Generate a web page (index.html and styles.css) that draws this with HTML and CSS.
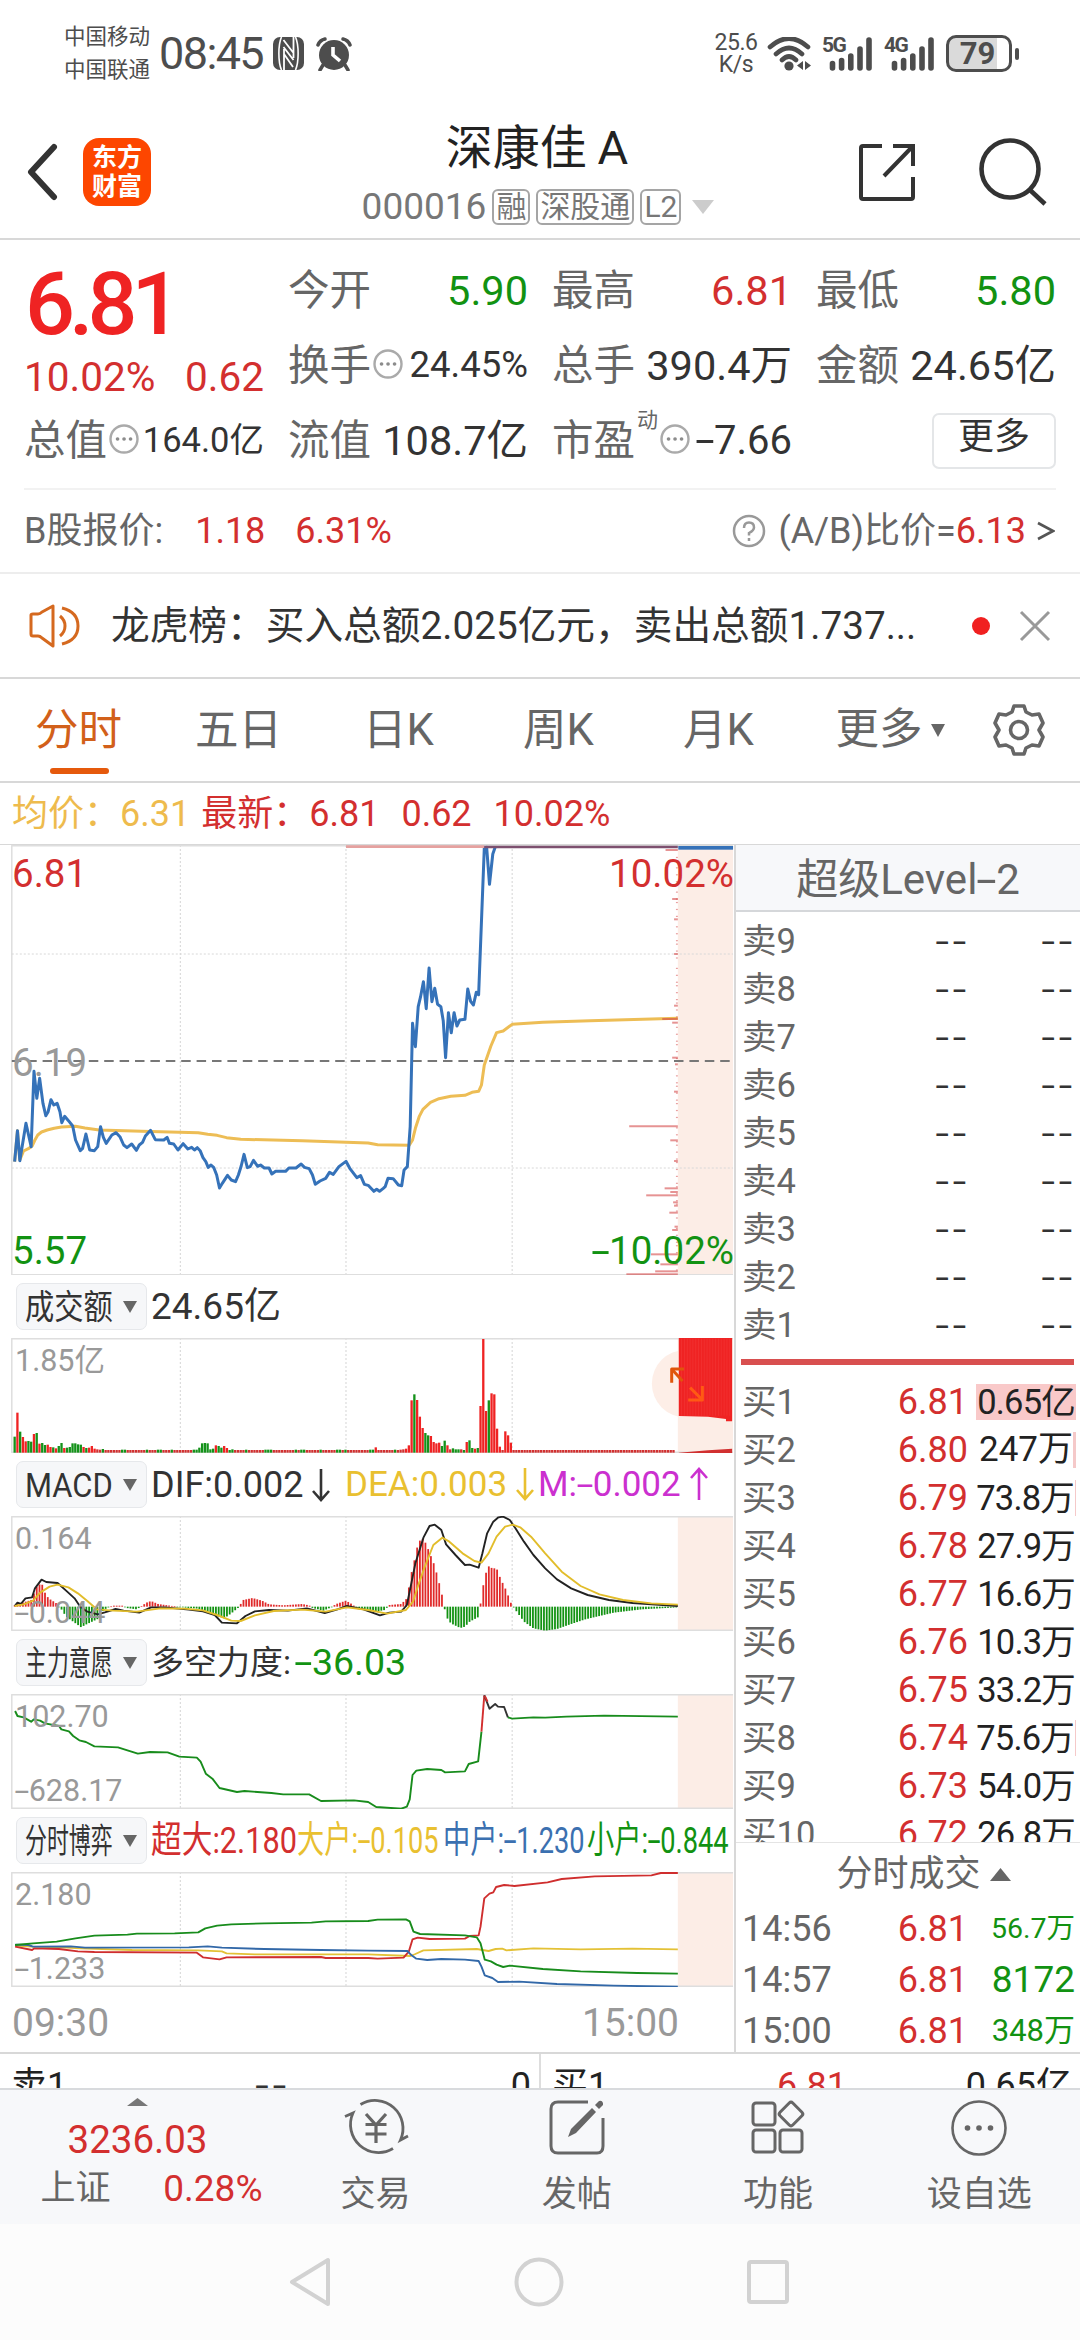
FILE: index.html
```html
<!DOCTYPE html>
<html lang="zh-CN">
<head>
<meta charset="utf-8">
<title>深康佳 A 000016</title>
<link rel="stylesheet" href="styles.css">
</head>
<body>
<div class="statusbar">
  <div class="carriers"><span>中国移动</span><span>中国联通</span></div>
  <span class="clock">08:45</span>
  <svg class="nfc" width="31" height="33" viewBox="0 0 31 33"><rect width="31" height="33" rx="7" fill="#4d4d4d"/><path d="M8.500 0C5 8 5 25 8.500 33M22.500 0C26 8 26 25 22.500 33" stroke="#fff" stroke-width="1.600" fill="none"/><path d="M11 12v21M20.500 0v21M10.500 3L20.500 16M10.500 10L20.500 23M11 17L20 30" stroke="#fff" stroke-width="1.800" fill="none"/></svg>
  <svg class="alarm" width="36" height="34" viewBox="0 0 36 34"><circle cx="18" cy="18" r="15" fill="#4d4d4d"/><path d="M2 8Q4 3 9 2M34 8Q32 3 27 2M7 28l-3 5M29 28l3 5" stroke="#4d4d4d" stroke-width="3.5" fill="none" stroke-linecap="round"/><path d="M17 10v8l7 6" stroke="#fff" stroke-width="3.6" fill="none"/></svg>
  <div class="speed"><span>25.6</span><span>K/s</span></div>
  <svg class="wifi" width="45" height="34" viewBox="0 0 45 34" fill="none" stroke="#4d4d4d" stroke-width="4.6" stroke-linecap="round"><path d="M3 10Q22-7 41 10M9 17Q22 5 35 17M15 23Q22 16 29 23"/><circle cx="22" cy="29" r="4.6" fill="#4d4d4d" stroke="none"/><path d="M36 24v9l-6-4.500zM38 24v9l6-4.500z" fill="#4d4d4d" stroke="none"/></svg>
  <div class="signal"><b>5G</b><svg width="52" height="34" viewBox="0 0 52 34" stroke="#4d4d4d" stroke-width="5.600" stroke-linecap="round"><path d="M10.500 26.500V31M19.600 23.500V31M28.800 19V31M38 12V31M47 3V31"/></svg></div>
  <div class="signal"><b>4G</b><svg width="52" height="34" viewBox="0 0 52 34" stroke="#4d4d4d" stroke-width="5.600" stroke-linecap="round"><path d="M10.500 26.500V31M19.600 23.500V31M28.800 19V31M38 12V31M47 3V31"/></svg></div>
  <div class="battery"><b>79</b></div><i class="nub"></i>
</div>

<header class="header">
  <svg class="back" width="34" height="58" viewBox="0 0 34 58"><path d="M29 4L6 29L29 54" stroke="#333" stroke-width="6" fill="none" stroke-linecap="round" stroke-linejoin="round"/></svg>
  <div class="logo"><span>东方</span><span>财富</span></div>
  <div class="title">
    <h1>深康佳 A</h1>
    <div class="code">000016<span class="tag">融</span><span class="tag">深股通</span><span class="tag">L2</span><svg width="22" height="14" viewBox="0 0 22 14"><path d="M0 0h22L11 14z" fill="#ccc"/></svg></div>
  </div>
  <svg class="share" width="60" height="60" viewBox="0 0 60 60" fill="none" stroke="#333" stroke-width="4"><path d="M25 4H6Q4 4 4 6V55Q4 57 6 57H54Q56 57 56 55V35M36 4H56V24M56 4L27 34"/></svg>
  <svg class="search" width="70" height="70" viewBox="0 0 70 70" fill="none" stroke="#333" stroke-width="4.600"><circle cx="32" cy="32" r="28.500"/><path d="M52 53L67 67"/></svg>
</header>

<section class="quote">
  <div class="col first">
    <strong class="price">6.81</strong>
    <div class="change up"><span>10.02%</span><span>0.62</span></div>
    <div class="cell"><label>总值</label><svg class="dots" width="30" height="30" viewBox="0 0 30 30"><circle cx="15" cy="15" r="13.500"/><path d="M8.500 15h.1M15 15h.1M21.500 15h.1"/></svg><span class="v34">164.0亿</span></div>
  </div>
  <div class="col">
    <div class="cell"><label>今开</label><span class="down">5.90</span></div>
    <div class="cell"><label>换手</label><svg class="dots" width="30" height="30" viewBox="0 0 30 30"><circle cx="15" cy="15" r="13.500"/><path d="M8.500 15h.1M15 15h.1M21.500 15h.1"/></svg><span class="v36">24.45%</span></div>
    <div class="cell"><label>流值</label><span>108.7亿</span></div>
  </div>
  <div class="col">
    <div class="cell"><label>最高</label><span class="up">6.81</span></div>
    <div class="cell"><label>总手</label><span>390.4万</span></div>
    <div class="cell"><label>市盈</label><sup>动</sup><svg class="dots" width="30" height="30" viewBox="0 0 30 30"><circle cx="15" cy="15" r="13.500"/><path d="M8.500 15h.1M15 15h.1M21.500 15h.1"/></svg><span class="pe"><span class="n">-</span>7.66</span></div>
  </div>
  <div class="col">
    <div class="cell"><label>最低</label><span class="down">5.80</span></div>
    <div class="cell"><label>金额</label><span>24.65亿</span></div>
    <div class="cell end"><button class="more">更多</button></div>
  </div>
</section>

<section class="bshare">
  <span>B股报价:</span><span class="up b1">1.18</span><span class="up b2">6.31%</span>
  <svg class="help" width="34" height="34" viewBox="0 0 34 34" fill="none" stroke="#999" stroke-width="2.500"><circle cx="17" cy="17" r="15"/><path d="M12 14Q12 8.500 17 8.500T22 13.500Q22 16.500 17 19V21.500M17 24V27"/></svg>
  <span class="ratio">(A/B)比价=<span class="up">6.13</span></span>
  <svg width="18" height="20" viewBox="0 0 18 20"><path d="M1 2L16 10L1 18" fill="none" stroke="#555" stroke-width="2.600"/></svg>
</section>

<section class="news">
  <svg width="52" height="44" viewBox="0 0 52 44" fill="none" stroke="#d5691f" stroke-width="3"><path d="M2 11Q2 10 4 10H9Q11 10 13 8L24 2V42L13 34Q11 32 9 32H4Q2 32 2 30Z" stroke-linejoin="round"/><path d="M31 12Q36 16 36 22T31 32M33 4Q49 8 49 22T33 40"/></svg>
  <p>龙虎榜：买入总额2.025亿元，卖出总额1.737...</p>
  <i class="reddot"></i>
  <svg width="32" height="32" viewBox="0 0 32 32"><path d="M2 2L30 30M30 2L2 30" stroke="#999" stroke-width="3"/></svg>
</section>

<nav class="tabs">
  <a class="on">分时</a><a>五日</a><a>日K</a><a>周K</a><a>月K</a>
  <a class="more-tab">更多<svg width="14" height="13" viewBox="0 0 14 13"><path d="M0 0h14L7 13z" fill="#666"/></svg></a>
  <svg class="gear" width="54" height="54" viewBox="0 0 54 54" fill="none" stroke="#666" stroke-width="3.600" stroke-linejoin="round"><path d="M22 3H32L34 9L40 12L47 11L51 20L47 27L51 34L47 43L40 42L34 45L32 51H22L20 45L14 42L7 43L3 34L7 27L3 20L7 11L14 12L20 9Z"/><circle cx="27" cy="27" r="8.500"/></svg>
</nav>

<div class="avg"><span class="gold">均价：6.31</span><span class="up a2">最新：6.81</span><span class="up a3">0.62</span><span class="up a4">10.02%</span></div>

<main class="main">
  <section class="charts">
    <div class="panel big">
      <svg id="price" viewBox="0 15 1555 1290" preserveAspectRatio="none"></svg>
      <span class="lab up tl">6.81</span><span class="lab up tr">10.02%</span>
      <span class="lab ml">6.19</span>
      <span class="lab down bl">5.57</span><span class="lab down br"><span class="n">-</span>10.02%</span>
    </div>
    <div class="ind"><div class="pill"><span class="sx3">成交额</span><i></i></div><span class="i1">24.65亿</span></div>
    <div class="panel">
      <svg id="vol" viewBox="0 204 1555 345" preserveAspectRatio="none"></svg>
      <span class="lab sm st">1.85亿</span>
    </div>
    <div class="ind"><div class="pill"><span class="sxm">MACD</span><i></i></div><span class="i1 dif">DIF:0.002<svg width="20" height="34" viewBox="0 0 20 34"><path d="M10 1V31M2 23L10 32L18 23" fill="none" stroke="#333" stroke-width="2.600"/></svg></span><span class="dea">DEA:0.003<svg width="20" height="34" viewBox="0 0 20 34"><path d="M10 1V31M2 23L10 32L18 23" fill="none" stroke="#e9c030" stroke-width="2.600"/></svg></span><span class="mm">M:<span class="n">-</span>0.002<svg width="20" height="34" viewBox="0 0 20 34"><path d="M10 33V3M2 11L10 2L18 11" fill="none" stroke="#cb30cf" stroke-width="2.600"/></svg></span></div>
    <div class="panel">
      <svg id="macd" viewBox="0 738 1555 345" preserveAspectRatio="none"></svg>
      <span class="lab sm st">0.164</span><span class="lab sm sb"><span class="n">-</span>0.044</span>
    </div>
    <div class="ind"><div class="pill"><span class="sx4">主力意愿</span><i></i></div><span class="i1 force">多空力度:</span><span class="down fv"><span class="n">-</span>36.03</span></div>
    <div class="panel">
      <svg id="force" viewBox="0 192 1555 345" preserveAspectRatio="none"></svg>
      <span class="lab sm st">102.70</span><span class="lab sm sb"><span class="n">-</span>628.17</span>
    </div>
    <div class="ind"><div class="pill"><span class="sx4">分时博弈</span><i></i></div><div class="game"><span class="g1">超大:2.180</span><span class="g2">大户:<span class="n">-</span>0.105</span><span class="g3">中户:<span class="n">-</span>1.230</span><span class="g4">小户:<span class="n">-</span>0.844</span></div></div>
    <div class="panel">
      <svg id="game" viewBox="0 726 1555 345" preserveAspectRatio="none"></svg>
      <span class="lab sm st">2.180</span><span class="lab sm sb"><span class="n">-</span>1.233</span>
    </div>
    <div class="times"><span>09:30</span><span>15:00</span></div>
  </section>

  <section class="book">
    <h2>超级Level<span class="n">-</span>2</h2>
    <div class="asks">
      <div class="row"><span>卖9</span><b>--</b><b>--</b></div>
      <div class="row"><span>卖8</span><b>--</b><b>--</b></div>
      <div class="row"><span>卖7</span><b>--</b><b>--</b></div>
      <div class="row"><span>卖6</span><b>--</b><b>--</b></div>
      <div class="row"><span>卖5</span><b>--</b><b>--</b></div>
      <div class="row"><span>卖4</span><b>--</b><b>--</b></div>
      <div class="row"><span>卖3</span><b>--</b><b>--</b></div>
      <div class="row"><span>卖2</span><b>--</b><b>--</b></div>
      <div class="row"><span>卖1</span><b>--</b><b>--</b></div>
    </div>
    <div class="spread"></div>
    <div class="bids">
      <div class="row"><span>买1</span><em>6.81</em><u class="full">0.65亿</u></div>
      <div class="row"><span>买2</span><em>6.80</em><u class="w3 wide">247万</u></div>
      <div class="row"><span>买3</span><em>6.79</em><u class="w1">73.8万</u></div>
      <div class="row"><span>买4</span><em>6.78</em><u>27.9万</u></div>
      <div class="row"><span>买5</span><em>6.77</em><u>16.6万</u></div>
      <div class="row"><span>买6</span><em>6.76</em><u>10.3万</u></div>
      <div class="row"><span>买7</span><em>6.75</em><u>33.2万</u></div>
      <div class="row"><span>买8</span><em>6.74</em><u class="w1">75.6万</u></div>
      <div class="row"><span>买9</span><em>6.73</em><u>54.0万</u></div>
      <div class="row"><span>买10</span><em>6.72</em><u>26.8万</u></div>
    </div>
    <h3>分时成交<svg width="21" height="13" viewBox="0 0 21 13"><path d="M10.500 0L21 13H0z" fill="#666"/></svg></h3>
    <div class="trades">
      <div class="row"><span>14:56</span><em>6.81</em><u class="t28">56.7万</u></div>
      <div class="row"><span>14:57</span><em>6.81</em><u class="t36">8172</u></div>
      <div class="row"><span>15:00</span><em>6.81</em><u class="t31">348万</u></div>
    </div>
  </section>
</main>

<section class="strip">
  <div><span>卖1</span><b>--</b><span>0</span></div>
  <div><span>买1</span><em>6.81</em><span>0.65亿</span></div>
</section>

<footer class="dock">
  <div class="index">
    <svg width="21" height="8" viewBox="0 0 21 8"><path d="M10.500 0L21 8H0z" fill="#777"/></svg>
    <strong>3236.03</strong>
    <div><span>上证</span><em>0.28%</em></div>
  </div>
  <a><svg width="68" height="60" viewBox="0 0 68 60" fill="none" stroke="#666" stroke-width="2.800"><path d="M18.500 6.500A28 28 0 0 1 58.500 42L66 38M51 50.500A28 28 0 0 1 11 15L3 18.500"/><path d="M24 16L34 27L44 16M23.500 26.500H44.500M23.500 36H44.500M34 26V45" stroke-width="3.200"/></svg><span>交易</span></a>
  <a><svg width="56" height="60" viewBox="0 0 56 60" fill="none" stroke="#666" stroke-width="3"><path d="M39 4H9Q2 4 2 11V48Q2 55 9 55H48Q54 55 54 48V20"/><path d="M43 10L47 14L27 35L19 39L22 31ZM46 7L50 3Q53 2 54 5L54 7L50 11Z" fill="#666" stroke="none"/></svg><span>发帖</span></a>
  <a><svg width="56" height="60" viewBox="0 0 56 60" fill="none" stroke="#666" stroke-width="3"><rect x="3" y="5" width="22" height="22" rx="3"/><rect x="3" y="32" width="22" height="22" rx="3"/><rect x="30" y="32" width="22" height="22" rx="3"/><rect x="32" y="7" width="18" height="18" rx="2.500" transform="rotate(45 41 16)"/></svg><span>功能</span></a>
  <a><svg width="60" height="60" viewBox="0 0 60 60" fill="none" stroke="#666" stroke-width="2.600"><circle cx="30" cy="30" r="26.500"/><g fill="#666" stroke="none"><circle cx="18.500" cy="30" r="2.800"/><circle cx="30" cy="30" r="2.800"/><circle cx="41.500" cy="30" r="2.800"/></g></svg><span>设自选</span></a>
</footer>

<div class="sysnav">
  <svg width="44" height="52" viewBox="0 0 44 52"><path d="M40 4V48L4 26Z" fill="none" stroke="#d2d2d2" stroke-width="4" stroke-linejoin="round"/></svg>
  <svg width="52" height="52" viewBox="0 0 52 52"><circle cx="26" cy="26" r="22.500" fill="none" stroke="#d2d2d2" stroke-width="4"/></svg>
  <svg width="44" height="46" viewBox="0 0 44 46"><rect x="3" y="3" width="38" height="40" rx="2" fill="none" stroke="#d2d2d2" stroke-width="4"/></svg>
</div>
<script src="charts.js"></script>
</body>
</html>
```

FILE: styles.css
```css
* { box-sizing: border-box; }
body {
  margin: 0; width: 1080px; height: 2340px; overflow: hidden; background: #fff; color: #333;
  font-family: Roboto, "Noto Sans CJK SC", sans-serif; font-size: 36px; line-height: 1;
}
svg { display: block; flex: none; }
i, em { font-style: normal; }
u { text-decoration: none; }
b { font-weight: 400; }
h1, h2, h3, p { margin: 0; font-weight: 400; }
.up { color: #d32f2f; }
.down { color: #129212; }
/* minus signs are drawn wide, as in the app's numerals */
.n { display: inline-block; width: .45em; text-align: center; transform: scaleX(1.75); }

.statusbar { height: 110px; padding-left: 64px; display: flex; align-items: center; color: #4d4d4d; padding-bottom: 3px; }
.carriers { display: flex; flex-direction: column; font-size: 21.5px; line-height: 33px; width: 95px; margin-top: -2px; }
.clock { font-size: 45px; letter-spacing: -1.6px; width: 114px; }
.alarm { margin-left: 12px; }
.speed { margin-left: 361px; width: 46px; text-align: center; display: flex; flex-direction: column; font-size: 23px; line-height: 22px; letter-spacing: -.5px; }
.wifi { margin-left: 8px; margin-right: 10px; }
.signal { position: relative; width: 62px; height: 34px; display: flex; align-items: center; }
.signal b { position: absolute; left: 0; top: 0; font-weight: 700; font-size: 21px; line-height: 17px; letter-spacing: -1.5px; }
.battery { width: 66px; height: 37px; border: 3px solid #4d4d4d; border-radius: 10px; background: linear-gradient(90deg, #dadada 48px, #fff 48px); }
.battery b { display: block; text-align: center; font-weight: 700; font-size: 31px; line-height: 32px; padding-right: 4px; padding-left: 1px; }
.nub { width: 4px; height: 12px; border-radius: 2px; background: #4d4d4d; margin-left: 3px; }

.header { height: 130px; border-bottom: 2px solid #d8d8d8; display: flex; }
.back { margin: 33px 0 0 25px; }
.logo { margin: 28px 0 0 24px; width: 68px; height: 68px; border-radius: 16px; background: #fd4600; color: #fff; font-size: 25px; font-weight: 700; line-height: 29px; display: flex; flex-direction: column; align-items: center; justify-content: center; }
.title { width: 420px; margin-left: 177px; display: flex; flex-direction: column; align-items: center; }
h1 { font-size: 47px; line-height: 60px; margin-top: 8px; color: #222; padding-right: 2px; word-spacing: -1px; }
.code { display: flex; align-items: center; margin-top: 10px; height: 37px; color: #777; font-size: 37px; }
.tag { border: 2px solid #a5a5a5; border-radius: 6px; font-size: 30px; line-height: 32px; height: 36px; padding: 0 2px; margin-left: 6px; }
.code svg { margin-left: 11px; }
.share { margin: 32px 0 0 109px; }
.search { margin: 27px 0 0 61px; }

.quote { height: 250px; margin: 0 24px; border-bottom: 2px solid #f2f2f2; display: grid; grid-template-columns: repeat(4, 240px); column-gap: 24px; padding-top: 13px; }
.cell { height: 75px; display: flex; align-items: center; justify-content: space-between; font-size: 41.500px; }
.cell label { color: #666; }
.dots { margin: 0 auto 4px 2px; fill: none; stroke: #aaa; stroke-width: 2.400; }
.dots path { stroke: #8c8c8c; stroke-width: 3.600; stroke-linecap: round; }
.v36 { font-size: 36.500px; }
.v34 { font-size: 34.500px; }
.cell sup { font-size: 21px; color: #666; align-self: flex-start; margin: 7px 0 0 2px; }
.pe { font-size: 40px; }
.price { display: block; height: 98px; padding: 9px 0 0 1px; font-weight: 500; font-size: 88px; line-height: 84px; letter-spacing: -6px; color: #ef2323; }
.change { height: 52px; display: flex; align-items: center; justify-content: space-between; font-size: 40.500px; }
.end { justify-content: flex-end; }
.more { width: 124px; height: 56px; background: #fff; border: 2px solid #e4e6e8; border-radius: 7px; font: 36px Roboto, "Noto Sans CJK SC", sans-serif; line-height: 44px; color: #333; padding: 0 0 7px; }

.bshare { height: 84px; border-bottom: 2px solid #ededed; display: flex; align-items: center; padding: 0 25px 0 24px; color: #666; font-size: 36px; }
.b1 { margin-left: 32px; } .b2 { margin-left: 30px; }
.help { margin-left: auto; }
.ratio { margin: 0 11px 0 12px; }

.news { height: 105px; border-bottom: 2px solid #d8d8d8; display: flex; align-items: center; padding: 0 29px 0 29px; }
.news p { font-size: 38.700px; margin-left: 30px; width: 861px; white-space: nowrap; line-height: 50px; }
.reddot { width: 18px; height: 18px; border-radius: 50%; background: #f02020; margin-right: auto; }

.tabs { height: 104px; border-bottom: 2px solid #d8d8d8; display: flex; align-items: center; color: #666; font-size: 43.500px; }
.tabs a { width: 160px; text-align: center; height: 102px; line-height: 104px; position: relative; padding-right: 3px; }
.tabs .on { color: #d2601a; }
.on::after { content: ""; position: absolute; left: 50px; bottom: 7px; width: 59px; height: 6px; border-radius: 3px; background: #e5590c; }
.tabs .more-tab { width: 192px; display: flex; align-items: center; justify-content: center; gap: 8px; padding-right: 12px; }

.avg { height: 62px; border-bottom: 1px solid #d8d8d8; display: flex; align-items: center; padding-left: 12px; font-size: 36px; }
.gold { color: #eebb4d; } .a2 { margin-left: 11px; } .a3 { margin-left: 22px; } .a4 { margin-left: 22px; }

.main { height: 1209px; display: grid; grid-template-columns: 734px 346px; border-bottom: 2px solid #d8d8d8; }
.charts { overflow: hidden; height: 1207px; }
.panel { position: relative; height: 115px; }
.panel.big { height: 430px; }
.panel svg { width: 734px; height: 100%; }
.lab { position: absolute; font-size: 38.500px; line-height: 40px; }
.tl { left: 12px; top: 9px; } .tr { right: 0; top: 9px; }
.ml { left: 12px; top: 198px; color: #999; }
.bl { left: 12px; bottom: 4px; } .br { right: 0; bottom: 4px; }
.sm { color: #999; font-size: 30.500px; line-height: 34px; left: 15px; }
.st { top: 6px; } .sb { top: 80px; }
.ind { height: 63px; display: flex; align-items: center; padding-left: 16px; font-size: 37px; white-space: nowrap; }
.pill { flex: none; width: 131px; height: 47px; background: #f6f7f9; border: 1.500px solid #e6e8eb; border-radius: 7px; display: flex; align-items: center; padding-left: 8px; font-size: 34px; }
.pill span { width: 98px; transform-origin: 0 50%; }
.pill i { width: 0; border: 7.500px solid transparent; border-top: 12px solid #666; border-bottom: 0; }
.sx3 { transform: scaleX(.86); } .sx4 { transform: scaleX(.645); } .sxm { transform: scaleX(.91); }
.i1 { margin-left: 4px; }
.ind svg { display: inline-block; vertical-align: -5px; margin-left: 8px; }
.dif { width: 194px; font-size: 36px; }
.dea { color: #e9c030; width: 193px; font-size: 35px; }
.mm { color: #cb30cf; font-size: 35px; }
.force { width: 144px; font-size: 33px; }
.fv { font-size: 37.500px; }
.game { display: flex; margin-left: 4px; }
.game > span { transform-origin: 0 50%; transform: scaleX(.735); }
.game .g1 { width: 146px; color: #d32f2f; transform: scaleX(.83); }
.game .g2 { width: 146px; color: #e9c030; }
.game .g3 { width: 144px; color: #3b70b0; }
.game .g4 { width: 140px; color: #129212; }
.times { height: 66px; display: flex; justify-content: space-between; padding: 6px 55px 0 12px; align-items: center; color: #999; font-size: 39px; }

.book { border-left: 2px solid #d8d8d8; height: 1207px; overflow: hidden; }
h2 { height: 67px; background: #f7f8fa; border-bottom: 2px solid #d5d7da; text-align: center; font-size: 42px; line-height: 69px; color: #666; }
.row { height: 48px; display: grid; grid-template-columns: 122px 104px 108px; align-items: center; padding-left: 6px; color: #666; font-size: 34.500px; }
.row em { color: #d32f2f; font-size: 36px; text-align: right; }
.row b, .strip b { font-family: "DejaVu Sans", sans-serif; font-size: 44px; line-height: 34px; height: 34px; color: #333; text-align: right; letter-spacing: 1.500px; margin-right: -1px; transform: scaleY(.72); }
.row u { justify-self: end; text-align: right; color: #222; font-size: 34.500px; letter-spacing: -.8px; line-height: 36px; padding-right: 1px; width: 100px; white-space: nowrap; }
.row u.full { background: #f9c9c9; }
.row u.wide { letter-spacing: 0; font-size: 35px; padding-right: 0; }
.w3 { border-right: 3px solid #f5c9c9; } .w1 { border-right: 1px solid #f5c9c9; }
.asks { padding-top: 5px; }
.asks .row b:last-child { margin-right: 1px; }
.spread { height: 6px; margin: 10px 6px 0 5px; background: #d84f4f; }
.bids { padding-top: 13px; height: 478px; overflow: hidden; border-bottom: 1px solid #e4e4e4; }
h3 { height: 60px; display: flex; align-items: center; justify-content: center; gap: 9px; font-size: 36px; color: #666; padding: 2px 0 0 31px; }
.trades .row { height: 51px; }
.trades span, .trades em { font-size: 36px; }
.trades .row u { color: #129212; letter-spacing: 0; }
.trades .row .t28 { font-size: 28.500px; } .trades .row .t36 { font-size: 37px; } .trades .row .t31 { font-size: 31px; }

.strip { height: 34px; overflow: hidden; display: grid; grid-template-columns: 541px 539px; color: #222; font-size: 36px; }
.strip div { display: grid; grid-template-columns: 1fr 1fr 1fr; padding: 14px 8px 0 11px; height: 50px; line-height: 36px; }
.strip div:first-child { border-right: 2px solid #ddd; }
.strip span:last-child { text-align: right; }
.strip b, .strip em { text-align: center; }
.strip em { color: #d32f2f; }

.dock { height: 136px; background: #f7f8fa; border-top: 2px solid #d8dadd; display: grid; grid-template-columns: 275px repeat(4, 201.200px); color: #666; font-size: 35px; }
.dock a { display: flex; flex-direction: column; align-items: center; padding-top: 8px; }
.dock a span { line-height: 50px; margin-top: 12px; }
.index { display: flex; flex-direction: column; align-items: center; padding-top: 8px; }
.index strong { font-weight: 400; font-size: 38.500px; line-height: 44px; margin-top: 12px; color: #d32f2f; }
.index div { width: 222px; display: flex; justify-content: space-between; line-height: 48px; margin: 3px 0 0 28px; }
.index em { color: #d32f2f; font-size: 37px; }

.sysnav { height: 116px; background: #fcfcfc; display: flex; align-items: flex-start; justify-content: center; gap: 181px; padding-top: 32px; }
.sysnav svg:first-child { margin-left: -2px; }
.sysnav svg:last-child { margin-top: 3px; }
```

FILE: charts.js
```javascript
const RED = '#ef2323', GREEN = '#129212', BLUE = '#3572b9', GOLD = '#edbd55';
const STEP = 5.84, X0 = 31;

function line(pts, color, w, extra = '') {
  return `<polyline points="${pts}" fill="none" stroke="${color}" stroke-width="${w}" vector-effect="non-scaling-stroke" stroke-linejoin="round" ${extra}/>`;
}
function seg(x1, y1, x2, y2, color, w, extra) {
  return line(`${x1},${y1} ${x2},${y2}`, color, w, extra);
}
// Pink closing zone, dotted time divisions and the frame shared by every panel.
function frame(top, bottom) {
  let s = `<rect x="1436" y="${top}" width="117" height="${bottom - top}" fill="#fcede6"/>`;
  for (const x of [382, 733, 1085]) s += seg(x, top, x, bottom, '#d4d4d4', 1, 'stroke-dasharray="2 2"');
  s += line(`1553,${top + 2} 25,${top + 2} 25,${bottom - 2} 1553,${bottom - 2}`, '#dedede', 1.5);
  return s;
}
function put(id, s) { document.getElementById(id).innerHTML = s; }

// Intraday price
let p = frame(15, 1306);
p += seg(25, 342, 1553, 342, '#d8d8d8', 1, 'stroke-dasharray="2 2"') + seg(25, 984, 1553, 984, '#d8d8d8', 1, 'stroke-dasharray="2 2"');
p += seg(25, 663, 1553, 663, '#777', 2, 'stroke-dasharray="9.500 5.900"');
p += line('31,965 37,872 42,960 50,933 60,926 68,918 74,900 80,885 88,876 100,870 115,865 130,861 160,859 180,864 210,870 300,874 420,878 440,883 460,886 480,893 510,898 640,902 780,909 800,914 867,916 874,900 880,865 888,830 896,808 912,787 930,776 955,769 985,766 1000,757 1014,754 1020,735 1026,675 1040,618 1052,578 1066,573 1085,553 1150,547 1250,542 1436,535', GOLD, 3);
p += line('31,965 37,872 42,962 55,850 66,920 72,694 78,775 84,715 91,790 97,827 102,815 108,779 114,795 121,790 127,815 131,848 137,829 145,842 154,858 160,900 170,932 175,925 182,882 190,930 200,932 207,920 213,860 219,892 225,910 237,885 246,878 254,890 262,915 269,923 279,912 289,931 295,915 302,907 308,888 319,871 329,899 347,900 354,892 359,910 368,912 377,930 388,911 398,927 406,922 412,930 418,923 424,932 430,953 436,965 441,982 447,975 453,983 459,1005 465,1044 471,1030 482,1006 490,1020 499,1025 505,1005 511,978 517,943 524,983 530,980 537,961 546,979 552,975 560,984 570,984 576,1002 584,994 605,994 612,984 627,984 638,972 645,982 655,986 662,1005 668,1033 678,1023 690,1015 698,997 706,1003 718,980 733,964 741,985 756,1013 764,1007 772,1033 780,1036 792,1054 798,1048 804,1054 812,1045 816,1040 822,1015 833,1016 844,1035 851,1037 856,990 863,980 869,860 874,550 880,620 886,500 891,470 897,425 903,506 909,384 915,485 921,445 927,493 934,500 939,542 944,653 950,518 956,578 962,518 968,558 974,540 985,538 991,447 997,484 1003,495 1009,457 1014,464 1026,24 1031,22 1037,133 1044,42 1049,22', BLUE, 3);
p += seg(733, 20, 1026, 20, '#e5a19f', 2.6) + seg(1026, 21, 1436, 21, '#7d506f', 2.6);
p += `<rect x="1437" y="18" width="116" height="11" fill="${BLUE}"/>`;
for (const [y, x] of [[30,1410],[177,1424],[238,1428],[342,1428],[497,1428],[537,1403],[548,1424],[653,1424],[673,1430],[755,1428],[859,1333],[901,1420],[963,1428],[1045,1408],[1056,1420],[1066,1369],[1087,1426],[1097,1428],[1118,1418],[1160,1429],[1170,1424],[1243,1379],[1273,1399],[1294,1388],[1303,1327]])
  p += seg(x, y, 1436, y, '#d3404090', 2);
for (let y = 42; y < 1300; y += 10.4) if (Math.sin(y * 7) > -.1) p += seg(1432, y, 1436, y, '#d3404080', 1.2);
put('price', p);

// Turnover bars: letter = direction, number = height
const early = 'g48 r120 g63 r47 r34 g35 g33 r56 g59 r27 g29 g23 r24 r17 g16 r13 g20 g29 r14 g15 g17 g28 g28 g25 g24 r17 g14 r15 r20 r12 r10 r9 g11';
const bars = {};
early.split(' ').forEach((b, i) => bars[i] = b);
const at = (x, list) => list.split(' ').forEach((b, i) => bars[Math.round((x - X0) / STEP) + i] = b);
at(424, 'g15 g28 g29 g28 g10 g12 r22 g20 g15 r20 r14 g8 g10');
at(798, 'r16');
at(850, 'r9 r10 r12 r22 r157 g175 r158 r108 r74 g59 g52 r50 r32 r28 r30 g20 g36 r22 r10 g13 g10 g10 r10 g8 r32 g37 g14 r12 g14 r140 r341 r125 g157 r178 r175 r72 r18 r8 r64 r52 r30');
let v = frame(204, 549);
for (let i = 0; i <= 239; i++) {
  const x = X0 + STEP * i;
  const b = bars[i] || ((i < 140 && (i % 9 === 3 || i % 13 < 2)) ? 'g9' : 'r8');
  const h = +b.slice(1);
  v += `<rect x="${x - 2.4}" y="${548 - h}" width="4.9" height="${h}" fill="${b[0] === 'g' ? '#14921a' : h < 12 ? '#d13030' : RED}"/>`;
}
v += `<ellipse cx="1452" cy="341" rx="71" ry="101" fill="#fdeee7"/>`;
v += `<path d="M1438 204H1551V454H1538V447L1500 440L1438 438Z" fill="${RED}"/><path d="M1438 548L1500 541L1551 536V549H1438Z" fill="#d13030"/>`;
for (let x = 1444; x < 1550; x += 6) v += seg(x, 206, x, 437, '#f5484880', .7);
v += line('1449,297 1423,297 1423,338', '#e0560c', 3) + seg(1423, 297, 1446, 333, '#e0560c', 3);
v += line('1488,348 1488,390 1458,390', '#ff5a14', 3) + seg(1462, 353, 1488, 390, '#ff5a14', 3);
put('vol', v);

// MACD histogram from key points, then DIF and DEA
const hist = [[31,5],[54,15],[66,20],[72,40],[78,60],[88,72],[94,45],[100,30],[108,20],[118,12],[124,0],[130,-8],[140,-30],[155,-45],[172,-62],[180,-55],[195,-45],[210,-35],[219,-10],[230,-2],[240,3],[260,3],[268,-4],[290,-8],[300,2],[310,12],[320,17],[335,8],[360,3],[380,-1],[400,-4],[420,-6],[440,-15],[460,-28],[475,-35],[490,-20],[505,-3],[515,20],[535,26],[555,18],[570,7],[600,4],[640,8],[655,4],[662,-4],[685,-12],[700,-3],[712,8],[733,18],[745,8],[755,-3],[800,-14],[815,-10],[825,5],[850,8],[862,25],[874,120],[880,150],[886,195],[897,205],[905,180],[921,122],[935,45],[941,0],[945,-30],[955,-50],[975,-64],[985,-60],[995,-45],[1015,-30],[1018,10],[1026,85],[1034,122],[1043,115],[1052,115],[1060,85],[1072,50],[1084,5],[1092,-10],[1110,-45],[1130,-65],[1155,-72],[1180,-67],[1210,-52],[1240,-38],[1300,-18],[1360,-8],[1436,-2]];
let m = frame(738, 1083), k = 0;
for (let i = 0; i <= 240; i++) {
  const x = X0 + STEP * i;
  while (k < hist.length - 2 && hist[k + 1][0] < x) k++;
  const [xa, a] = hist[k], [xb, b] = hist[k + 1];
  const h = a + (b - a) * Math.min(1, (x - xa) / (xb - xa));
  m += `<rect x="${x - 1.8}" y="${h > 0 ? 1010 - h : 1010}" width="3.8" height="${Math.max(2, Math.abs(h))}" fill="${h > 0 ? '#e02a2a' : GREEN}"/>`;
}
m += line('31,1008 37,998 44,1002 54,985 68,982 74,955 88,929 98,936 122,939 140,962 158,985 170,1010 185,1025 207,1033 222,1027 245,1017 262,1022 295,1028 320,1012 350,1012 400,1019 430,1024 455,1035 470,1058 502,1060 520,1038 540,1024 570,1020 610,1022 650,1015 688,1029 715,1018 735,1008 770,1018 805,1036 825,1028 850,1025 862,1005 870,950 880,880 897,803 910,768 921,764 935,780 945,823 965,855 985,885 995,884 1014,893 1022,850 1032,790 1045,755 1056,742 1066,740 1080,750 1092,775 1110,815 1130,855 1155,895 1180,928 1210,955 1245,975 1290,990 1340,999 1436,1008', '#222', 1.9);
m += line('31,1008 50,1003 70,992 85,968 105,950 122,944 145,952 165,970 185,993 205,1018 240,1022 290,1025 340,1015 390,1016 430,1021 460,1035 490,1052 510,1053 540,1036 580,1023 640,1019 690,1025 735,1012 780,1020 820,1031 860,1020 875,995 885,950 900,890 918,825 937,803 952,815 980,850 1005,873 1020,878 1035,850 1052,800 1070,770 1086,764 1102,772 1125,800 1155,850 1190,905 1230,948 1270,973 1320,990 1380,1000 1436,1004', '#e2bd2b', 1.9);
put('macd', m);

// Long/short force
let f = frame(192, 537);
f += line('32,243 37,258 50,262 66,275 72,268 85,272 95,280 125,288 130,298 146,304 155,318 168,331 182,336 200,349 250,352 270,361 292,371 318,366 355,367 380,380 417,383 425,395 436,431 450,446 465,474 502,486 518,483 575,489 600,493 655,493 680,513 750,511 780,516 797,531 850,536 862,530 868,508 874,435 882,422 905,417 935,420 943,427 985,424 993,402 1013,394 1020,305', '#188c1c', 1.9);
f += line('1020,305 1026,196', '#d32f2f', 1.9) + line('1026,196 1037,236 1049,222 1055,230 1068,231 1076,262', '#333', 1.9) + line('1027,198 1033,215', '#d32f2f', 1.9);
f += line('1076,262 1085,266 1130,262 1155,263 1200,260 1280,257 1436,260', '#188c1c', 1.9);
put('force', f);

// Order-size breakdown
let g = frame(726, 1071);
g += line('32,947 66,950 140,953 170,955 280,960 420,961 470,964 480,970 540,973 780,973 870,978 880,972 897,961 1010,957 1035,963 1050,957 1064,956 1073,961 1130,955 1230,958 1340,956 1436,958', '#e3c136', 1.9);
g += line('32,950 68,960 73,955 125,957 165,964 200,966 417,968 430,982 465,988 480,982 680,981 690,984 780,984 800,986 855,983 866,965 874,928 885,923 910,927 985,926 995,918 1014,916 1018,890 1026,805 1037,791 1045,787 1051,771 1068,765 1090,768 1160,757 1190,747 1260,739 1380,736 1400,729 1436,729', '#cf2e2e', 1.9);
g += line('32,944 60,945 70,950 150,949 180,953 400,952 440,949 470,953 560,957 680,960 780,962 863,963 872,976 882,986 905,990 935,987 985,989 1014,993 1020,1010 1027,1036 1043,1044 1055,1056 1100,1055 1180,1062 1300,1067 1436,1070', '#3268a8', 1.9);
g += line('32,945 70,940 120,935 160,925 200,917 270,914 290,911 370,910 420,907 435,895 460,887 490,883 560,880 660,878 690,874 780,873 800,869 860,868 868,874 876,905 890,912 985,916 1010,922 1018,940 1027,989 1040,994 1052,1004 1066,1011 1080,1007 1150,1017 1230,1024 1350,1029 1436,1031', '#188c1c', 1.9);
put('game', g);
```
